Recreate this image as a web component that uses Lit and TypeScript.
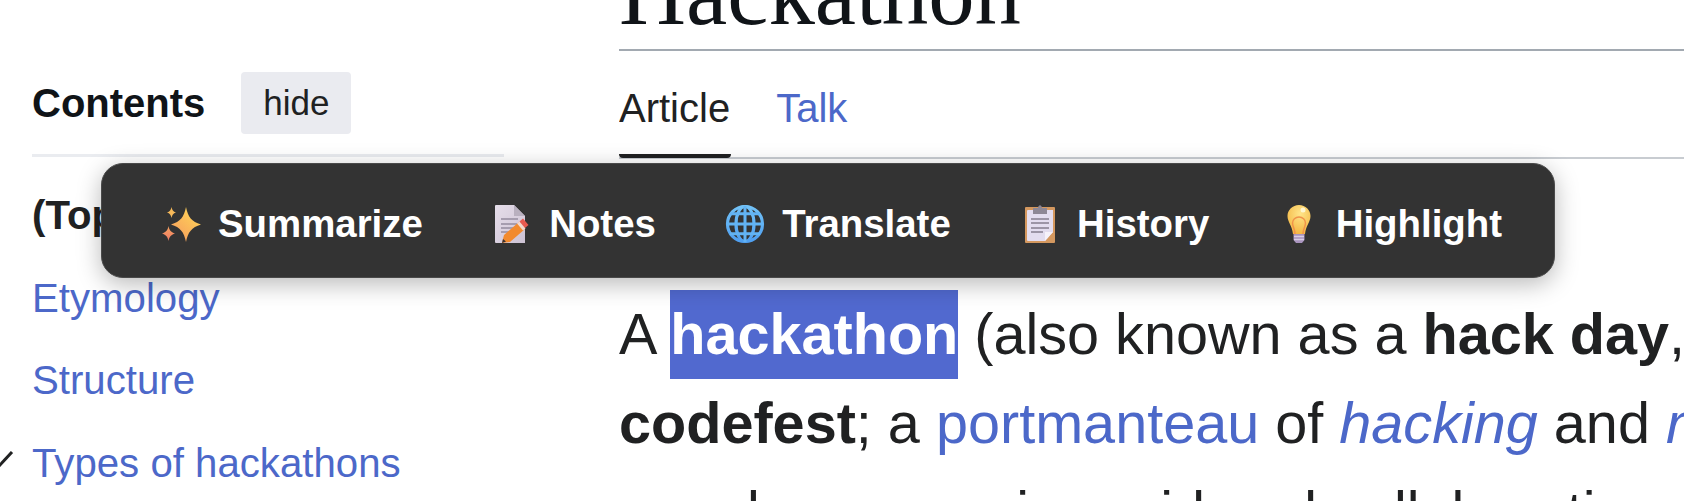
import { LitElement, html, css, svg } from "lit";
import { customElement } from "lit/decorators.js";

const sparkle = svg`<svg class="ic" viewBox="0 0 44 44"><defs><linearGradient id="sg" x1="0.85" y1="0.1" x2="0.15" y2="1"><stop offset="0" stop-color="#ffd457"/><stop offset="1" stop-color="#f59a5e"/></linearGradient><linearGradient id="sb" x1="0.5" y1="0" x2="0.5" y2="1"><stop offset="0" stop-color="#f7a35f"/><stop offset="1" stop-color="#ee7a66"/></linearGradient></defs>
<path fill="url(#sg)" d="M27 5C29 15 32.500 19.500 42 22.500C32.500 25.500 29 30 27 40C25 30 21.500 25.500 12 22.500C21.500 19.500 25 15 27 5z"/>
<path fill="#f6b95a" d="M12.500 5c.6 3 1.600 4.600 4.500 5.500c-2.900.9-3.900 2.500-4.500 5.500c-.6-3-1.600-4.600-4.500-5.500c2.900-.9 3.900-2.500 4.500-5.500z"/>
<path fill="url(#sb)" d="M9.500 24c.8 4 2.200 6 6.500 7.500c-4.300 1.500-5.700 3.500-6.500 7.500c-.8-4-2.200-6-6.500-7.500c4.300-1.500 5.700-3.500 6.500-7.500z"/></svg>`;

const notes = svg`<svg class="ic" viewBox="0 0 44 44"><defs><linearGradient id="ng" x1="0" y1="0" x2="1" y2="1"><stop offset="0" stop-color="#e6deea"/><stop offset="1" stop-color="#cdc2d4"/></linearGradient></defs>
<path fill="url(#ng)" d="M6 3h18l11 11v27H6a1 1 0 0 1-1-1V4a1 1 0 0 1 1-1z"/><path fill="#b9b0bf" d="M24 3l11 11H24z"/>
<path stroke="#a69daf" stroke-width="2" fill="none" d="M11 17h17M11 22h17M11 26h14M11 30h9"/>
<path fill="#f28a2e" d="M12 41l2-8 15-13 6 7-15 13z"/><path fill="#f3d8cc" d="M27 21.500l2.500-2 6 7-2.500 2z"/><path fill="#e85a4f" d="M29.500 19.500l3.500-3 5.500 6.500-3.500 3z"/><path fill="#3a3030" d="M12 41l1-4 3 2.600z"/></svg>`;

const globe = svg`<svg class="ic" viewBox="0 0 44 44"><defs><linearGradient id="gg" x1="0" y1="0" x2="0" y2="1"><stop offset="0" stop-color="#72c2f7"/><stop offset="1" stop-color="#4f9ff0"/></linearGradient></defs><g fill="none" stroke="url(#gg)" stroke-width="3.200"><circle cx="22" cy="22" r="17.500"/><ellipse cx="22" cy="22" rx="9" ry="17.500"/></g><path fill="none" stroke="#62b3f3" stroke-width="3" d="M22 4v36M4 22h36M7 11.700h30M7 31.700h30"/></svg>`;

const clip = svg`<svg class="ic" viewBox="0 0 44 44"><rect x="7" y="5" width="30" height="36" rx="1" fill="#d4985f"/><path fill="#e3ddef" d="M10 8h25v22l-8 9H10a1 1 0 0 1-1-1V9a1 1 0 0 1 1-1z"/><path fill="#f6f2fa" d="M35 30h-8v9z"/>
<path fill="#8d8795" d="M15 6h5c.3-3.600 3.700-3.600 4 0h5v6H15z"/><path stroke="#9c95a6" stroke-width="1.800" d="M13 17h18M13 21h18M13 26h18M13 30h12"/></svg>`;

const bulb = svg`<svg class="ic" viewBox="0 0 44 44"><defs><radialGradient id="bg" cx="0.55" cy="0.3" r="0.8"><stop offset="0" stop-color="#ffe58a"/><stop offset="1" stop-color="#f2b13a"/></radialGradient></defs>
<path fill="url(#bg)" d="M22 3c-6.500 0-11.500 5-11.500 11c0 6 4.500 9 5.500 18h12c1-9 5.500-12 5.500-18C33.500 8 28.500 3 22 3z"/>
<circle cx="26" cy="8" r="2.500" fill="#fff6cf"/>
<path fill="none" stroke="#f0934a" stroke-width="1.500" d="M18 32c0-5-2.500-7-2.500-11a6.500 6 0 0 1 13 0c0 4-2.500 6-2.500 11"/>
<path fill="#a893bd" d="M16.500 32h11v6l-2.500 3h-6l-2.500-3z"/><path stroke="#d8cde6" stroke-width="1.500" d="M17 34.500h10M17 37.500h10"/></svg>`;

@customElement("app-root")
export class AppRoot extends LitElement {
  static styles = css`
    :host { display: block; position: relative; width: 1684px; height: 501px; overflow: hidden; background: #fff; font-family: "Liberation Sans", Arial, sans-serif; color: #202122; }
    .page { display: grid; grid-template-columns: 619px 1fr; }
    a { color: #4c68c9; text-decoration: none; }
    .side { padding: 71px 0 0 32px; }
    .side-head { display: flex; align-items: flex-start; width: 472px; height: 86px; border-bottom: 3px solid #eaecf0; box-sizing: border-box; }
    .side-title { font-size: 40px; font-weight: 700; color: #101418; line-height: 54px; margin-top: 5px; }
    .hide { margin: 1px 0 0 36px; width: 110px; height: 62px; border-radius: 4px; background: #eaebf0; color: #202122; font-size: 35px; display: flex; align-items: center; justify-content: center; }
    .toc { display: flex; flex-direction: column; gap: 36.5px; padding-top: 36px; font-size: 40.2px; line-height: 46px; }
    .top { font-weight: 700; color: #202122; }
    .row { position: relative; }
    .chev { position: absolute; left: -32px; top: 10px; width: 14px; height: 16px; }
    .main { min-width: 0; overflow: hidden; }
    h1 { margin: -60px 0 0; font: 400 92.8px/106px "Liberation Serif", "Times New Roman", serif; color: #101418; border-bottom: 2px solid #a2a9b1; height: 109px; }
    .tabs { display: flex; gap: 46px; height: 108px; border-bottom: 2px solid #c8ccd1; box-sizing: border-box; font-size: 40px; padding-top: 34px; line-height: 46px; }
    .tab { position: relative; }
    .tab.on::after { content: ""; position: absolute; left: 0; right: -1px; top: 69px; height: 4px; background: #202122; border-radius: 0 0 4px 4px; }
    .body { padding-top: 131px; font-size: 57.6px; line-height: 89px; white-space: nowrap; }
    .line { display: block; height: 89px; }
    .sel { display: inline-block; background: #5169cf; color: #fff; font-weight: 700; line-height: 89px; }
    .bar { position: absolute; left: 101px; top: 163px; width: 1454px; height: 115px; box-sizing: border-box; display: flex; align-items: center; padding: 6px 52px 0 57px; justify-content: space-between; background: #333; border: 1px solid #4a4a4a; border-radius: 22px; box-shadow: 0 6px 24px rgba(0,0,0,.28); color: #fff; font-size: 38.4px; font-weight: 700; }
    .item { display: flex; align-items: center; gap: 15px; white-space: nowrap; }
    .ic { width: 44px; height: 44px; flex: none; overflow: visible; }
  `;

  render() {
    const items: [unknown, string][] = [
      [sparkle, "Summarize"], [notes, "Notes"], [globe, "Translate"], [clip, "History"], [bulb, "Highlight"],
    ];
    return html`
      <div class="page">
        <aside class="side">
          <div class="side-head"><span class="side-title">Contents</span><span class="hide">hide</span></div>
          <div class="toc">
            <span class="top">(Top)</span>
            <a>Etymology</a>
            <a>Structure</a>
            <a class="row">Types of hackathons<svg class="chev" viewBox="0 0 14 16"><path d="M-1 15L12 1" stroke="#202122" stroke-width="3" fill="none"/></svg></a>
          </div>
        </aside>
        <main class="main">
          <h1>Hackathon</h1>
          <div class="tabs"><span class="tab on">Article</span><a class="tab">Talk</a></div>
          <div class="body">
            <span class="line">A <span class="sel">hackathon</span> (also known as a <b>hack day</b>,</span>
            <span class="line"><b>codefest</b>; a <a>portmanteau</a> of <a><i>hacking</i></a> and <a><i>marathon</i></a></span>
            <span class="line">people engage in rapid and collaborative engineering</span>
          </div>
        </main>
      </div>
      <div class="bar">${items.map(([i, t]) => html`<span class="item">${i}<span>${t}</span></span>`)}</div>
    `;
  }
}
